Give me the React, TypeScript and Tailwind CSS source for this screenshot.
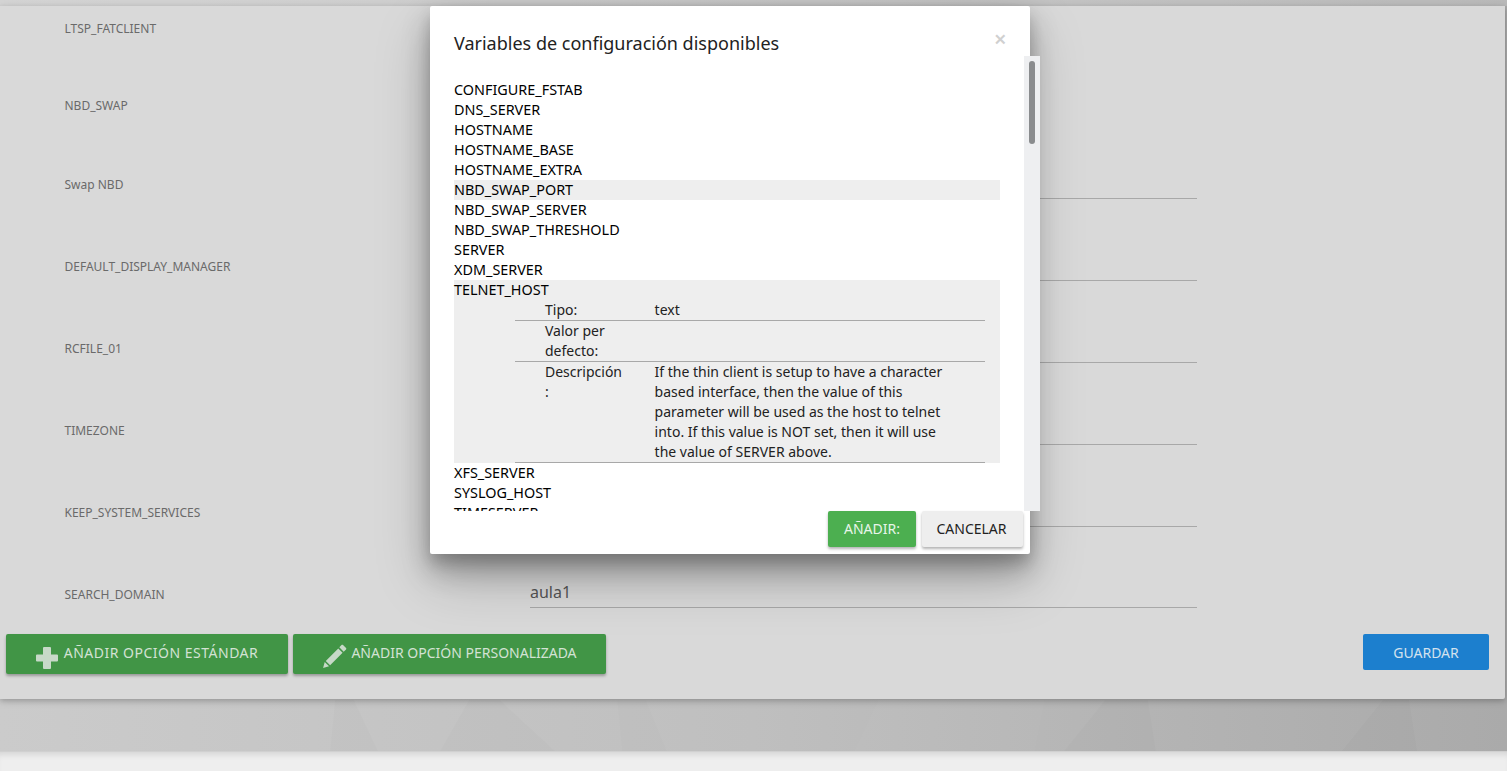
const names1 = ["CONFIGURE_FSTAB", "DNS_SERVER", "HOSTNAME", "HOSTNAME_BASE", "HOSTNAME_EXTRA"];
const names2 = ["NBD_SWAP_SERVER", "NBD_SWAP_THRESHOLD", "SERVER", "XDM_SERVER"];
const names3 = ["XFS_SERVER", "SYSLOG_HOST", "TIMESERVER"];

function Field({ label, value, rowClass }: { label: string; value?: string; rowClass: string }) {
  return (
    <div className={`flex items-center ${rowClass}`}>
      <div className="w-[530px] pl-[64.5px] pt-[2px] text-[12px] text-[#6a6a6a]">{label}</div>
      <div className="w-[667px] h-[32px] mt-[-1px] border-b border-[#a8a8a8] text-[16px] leading-[32px] text-[#555555] translate-y-[-1px]">
        {value}
      </div>
    </div>
  );
}

function Plain({ label, rowClass }: { label: string; rowClass: string }) {
  return (
    <div className={`flex items-center ${rowClass}`}>
      <div className="pl-[64.5px] text-[12px] text-[#6a6a6a]">{label}</div>
    </div>
  );
}

function Row({ name, hover }: { name: string; hover?: boolean }) {
  return <div className={`h-[20px] text-[14.4px] leading-[20px] text-black ${hover ? "bg-[#eeeeee]" : ""}`}>{name}</div>;
}

export default function App() {
  return (
    <div className="relative h-[771px] w-[1507px] overflow-hidden bg-[#bdbdbd] [font-family:'Noto_Sans','Open_Sans',sans-serif]">
      <svg className="absolute inset-0" width="1507" height="771" viewBox="0 0 1507 771">
        <defs>
          <linearGradient id="bg" x1="0" x2="1" y1="0" y2="0">
            <stop offset="0" stopColor="#cbcbcb" />
            <stop offset="0.5" stopColor="#bfbfbf" />
            <stop offset="1" stopColor="#aaaaaa" />
          </linearGradient>
        </defs>
        <rect width="1507" height="771" fill="url(#bg)" />
        <rect width="1507" height="6" fill="#fff" opacity="0.18" />
        <polygon points="43,700 282,700 158,751 10,751" fill="#fff" opacity="0.015" />
        <polygon points="335,700 354,700 378,751 330,751" fill="#000" opacity="0.012" />
        <polygon points="469,700 500,700 555,751 440,751" fill="#000" opacity="0.012" />
        <polygon points="617,700 646,700 667,751 622,751" fill="#000" opacity="0.008" />
        <polygon points="878,700 1045,700 1035,751 854,751" fill="#fff" opacity="0.015" />
        <polygon points="1105,700 1148,700 1156,751 1064,751" fill="#000" opacity="0.01" />
        <polygon points="1148,700 1289,700 1294,751 1156,751" fill="#fff" opacity="0.012" />
        <polygon points="1383,700 1409,700 1417,751 1342,751" fill="#000" opacity="0.015" />
      </svg>

      <div className="relative flex h-[751px] flex-col pt-[6px]">
        <div className="flex h-[693px] w-[1505px] flex-col rounded-br-[2px] bg-[#d9d9d9] shadow-[0_2px_5px_rgba(0,0,0,0.16),0_2px_10px_rgba(0,0,0,0.12)]">
          <Plain label="LTSP_FATCLIENT" rowClass="h-[44px] pt-[2px]" />
          <Plain label="NBD_SWAP" rowClass="h-[93px] pt-[18px]" />
          <Field label="Swap NBD" rowClass="h-[82px]" />
          <Field label="DEFAULT_DISPLAY_MANAGER" rowClass="h-[82px]" />
          <Field label="RCFILE_01" rowClass="h-[82px]" />
          <Field label="TIMEZONE" rowClass="h-[82px]" />
          <Field label="KEEP_SYSTEM_SERVICES" rowClass="h-[82px]" />
          <Field label="SEARCH_DOMAIN" value="aula1" rowClass="h-[81px]" />
          <div className="flex items-start gap-[5px] pl-[6px] pr-[16px] text-[14px]">
            <button className="flex h-[40px] w-[282px] items-center justify-center gap-[6px] rounded-[2px] bg-[#419546] pb-[3px] tracking-[0.5px] text-[#d3e2d4] shadow-[0_2px_3px_rgba(0,0,0,0.3)]">
              <svg className="translate-y-[5px]" width="22" height="22" viewBox="0 0 22 22" fill="#c7d9c8">
                <path d="M7 1a1 1 0 0 1 1-1h6a1 1 0 0 1 1 1v6.500h6a1 1 0 0 1 1 1v5a1 1 0 0 1-1 1h-6V21a1 1 0 0 1-1 1H8a1 1 0 0 1-1-1v-6.500H1a1 1 0 0 1-1-1v-5a1 1 0 0 1 1-1h6z" />
              </svg>
              AÑADIR OPCIÓN ESTÁNDAR
            </button>
            <button className="flex h-[40px] w-[313px] items-center justify-center gap-[3px] rounded-[2px] bg-[#419546] pb-[3px] text-[#d3e2d4] shadow-[0_2px_3px_rgba(0,0,0,0.3)]">
              <svg className="translate-y-[3px]" width="26" height="26" viewBox="0 0 24 24" fill="#c7d9c8">
                <path d="M1 23l1.500-5.500 4 4zM3.500 16.500 15 5l4 4L7.500 20.500zM16 4l2-2.200c.4-.4 1-.4 1.400 0l2.800 2.800c.4.4.4 1 0 1.400L20 8z" />
              </svg>
              AÑADIR OPCIÓN PERSONALIZADA
            </button>
            <button className="ml-auto h-[36px] w-[126px] rounded-[2px] bg-[#1c7fce] text-[#d3e2ee]">GUARDAR</button>
          </div>
        </div>
      </div>

      <div className="relative h-[20px] border-t border-[#d0d0d0] bg-[#eeeeee] shadow-[inset_0_6px_6px_-4px_rgba(0,0,0,0.12)]" />

      <div className="absolute left-[430px] top-[6px] h-[548px] w-[600px] rounded-[2px] bg-white shadow-[0_16px_28px_0_rgba(0,0,0,0.25),0_25px_55px_0_rgba(0,0,0,0.21),0_8px_14px_0_rgba(0,0,0,0.14)]">
        <div className="px-[24px] pt-[24px] text-[18px] leading-[26px] text-[#222]">Variables de configuración disponibles</div>
        <div className="absolute right-[23.500px] top-[19px] text-[22px] font-semibold leading-[26px] text-[#d0d0d0]">×</div>

        <div className="mt-[24px] h-[431px] overflow-hidden pl-[24px] pr-[30px] text-[14px] text-[#111]">
          {names1.map((n) => (
            <Row key={n} name={n} />
          ))}
          <Row name="NBD_SWAP_PORT" hover />
          {names2.map((n) => (
            <Row key={n} name={n} />
          ))}
          <div className="bg-[#eeeeee]">
            <Row name="TELNET_HOST" />
            <div className="ml-[61px] mr-[15px] leading-[20px] text-[#222]">
              <div className="flex border-b border-[#a8a8a8] pl-[30px]">
                <div className="w-[109.6px] pr-[30px]">Tipo:</div>
                <div>text</div>
              </div>
              <div className="flex border-b border-[#a8a8a8] pl-[30px]">
                <div className="w-[109.6px] pr-[30px]">Valor per defecto:</div>
                <div />
              </div>
              <div className="flex border-b border-[#a8a8a8] pl-[30px]">
                <div className="w-[109.6px] shrink-0 pr-[30px] [overflow-wrap:anywhere]">Descripción:</div>
                <div className="w-[295px]">
                  If the thin client is setup to have a character based interface, then the value of this parameter will be used as the host to telnet into. If this value is NOT set, then it will use the value of SERVER above.
                </div>
              </div>
            </div>
          </div>
          {names3.map((n) => (
            <Row key={n} name={n} />
          ))}
        </div>

        <div className="flex justify-end gap-[6px] pr-[7px] text-[14px]">
          <button className="h-[36px] w-[88px] rounded-[2px] bg-[#4caf50] pb-[2px] text-[#e8f5e9] shadow-[0_2px_3px_rgba(0,0,0,0.3)]">AÑADIR:</button>
          <button className="h-[36px] w-[101px] rounded-[2px] bg-[#eeeeee] pb-[2px] pr-[2px] text-[#222] shadow-[0_2px_3px_rgba(0,0,0,0.3)]">CANCELAR</button>
        </div>

        <div className="absolute left-[594px] top-[50px] h-[455px] w-[16px] bg-[#eeeff1]">
          <div className="ml-[5px] mt-[5px] h-[83px] w-[6px] rounded-[3px] bg-[#8a8c8e]" />
        </div>
      </div>
    </div>
  );
}
